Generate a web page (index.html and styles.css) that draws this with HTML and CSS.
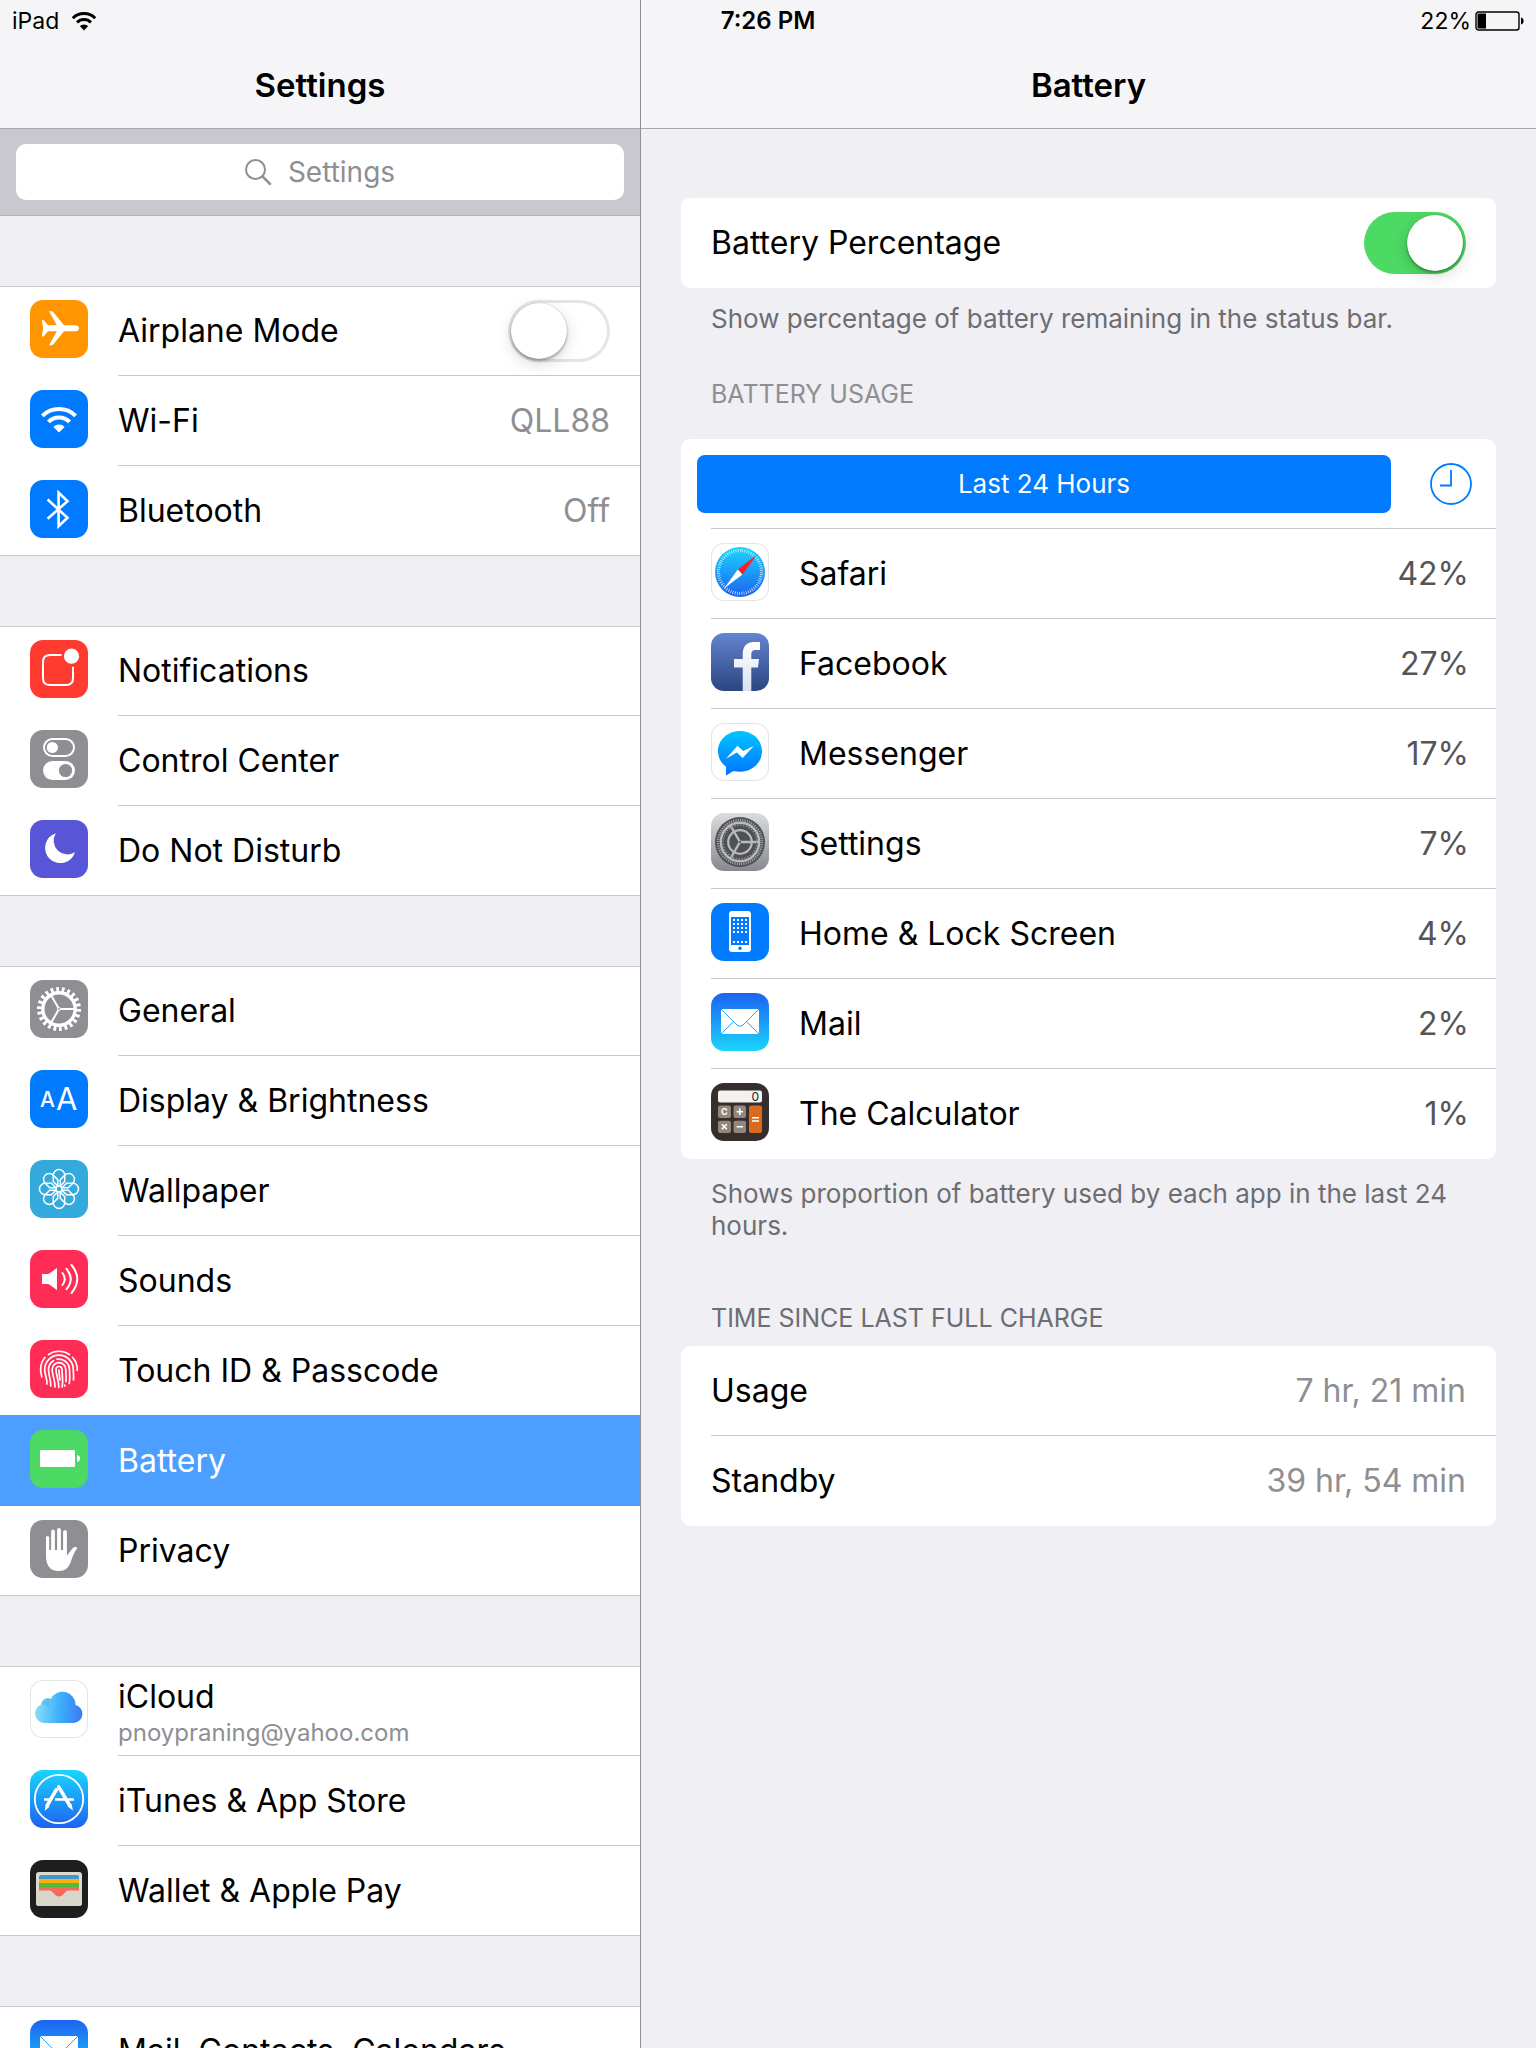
FILE: index.html
```html
<!DOCTYPE html>
<html lang="en">
<head>
    <meta charset="UTF-8">
    <meta name="viewport" content="width=device-width, initial-scale=1.0">
    <title>Settings - Battery</title>
    <link rel="stylesheet" href="styles.css">
</head>
<body>
    <!-- shared gradients and the mail glyph -->
    <svg class="defs" width="0" height="0" aria-hidden="true">
        <defs>
            <linearGradient id="g-cloud" gradientUnits="userSpaceOnUse" x1="5" y1="30" x2="53" y2="34">
                <stop offset="0" stop-color="#8edcf8"/>
                <stop offset="0.5" stop-color="#3bb1fb"/>
                <stop offset="1" stop-color="#3e76f6"/>
            </linearGradient>
            <linearGradient id="g-sky" x1="0" y1="0" x2="0" y2="1">
                <stop offset="0" stop-color="#1ad5fd"/>
                <stop offset="1" stop-color="#1d62f0"/>
            </linearGradient>
            <linearGradient id="g-msg" x1="0" y1="0" x2="0" y2="1">
                <stop offset="0" stop-color="#00c6ff"/>
                <stop offset="1" stop-color="#0072ff"/>
            </linearGradient>
            <linearGradient id="g-f" x1="0" y1="0" x2="0" y2="1">
                <stop offset="0" stop-color="#ffffff"/>
                <stop offset="1" stop-color="#dbe1f1"/>
            </linearGradient>
            <symbol id="mail" viewBox="0 0 58 58">
                <rect x="10" y="16" width="38" height="25" fill="#fff"/>
                <path d="M10 16L25 31.2q4 4 8 0L48 16M10 41L22.5 28.7M48 41L35.5 28.7" fill="none" stroke="#279bf6" stroke-width="1"/>
            </symbol>
        </defs>
    </svg>

    <div class="status-bar">
        <div class="status-left">
            <span>iPad</span>
            <svg class="status-wifi" viewBox="0 0 26 20" aria-hidden="true">
                <path d="M1.8 7.2a15.8 15.8 0 0 1 22.4 0M6 11.4a9.9 9.9 0 0 1 14 0" fill="none" stroke="#000" stroke-width="3"/>
                <path d="M13 19.5l-4.2-4.4a6 6 0 0 1 8.4 0z"/>
            </svg>
        </div>
        <div class="status-time">7:26 PM</div>
        <div class="status-right">
            <span>22%</span>
            <svg class="status-battery" viewBox="0 0 49 20" aria-hidden="true">
                <rect x="1" y="1" width="43" height="18" rx="2.5" fill="none" stroke="#000" stroke-width="1.4"/>
                <rect x="2.5" y="2.5" width="8.5" height="15"/>
                <path d="M46 6.5c1.8.5 2.6 1.9 2.6 3.5s-.8 3-2.6 3.5z"/>
            </svg>
        </div>
    </div>

    <div class="app">
        <aside class="sidebar">
            <header class="navbar"><h1>Settings</h1></header>
            <div class="search-bar">
                <label class="search">
                    <svg class="search-icon" viewBox="0 0 27 27" fill="none" stroke="#8e8e93" aria-hidden="true">
                        <circle cx="10.5" cy="10.5" r="9.5" stroke-width="2"/>
                        <path d="M17.2 17.2l8.5 8.5" stroke-width="2.6"/>
                    </svg>
                    <input type="search" placeholder="Settings" aria-label="Settings">
                </label>
            </div>

            <ul class="group">
                <li>
                    <label class="row">
                        <svg class="icon orange" viewBox="0 0 58 58" fill="#fff"><path d="M12 20h1.5l4.5 5.3h8.8L19 11.3h2.6q1 0 1.8 1L34 25.3h11.5c2.5 0 3.5 1.5 3.5 3s-1 3-3.5 3H34L23.4 44.2q-.8 1-1.8 1H19L26.8 31.3H18l-4.5 5.2H12l1-8.2z"/></svg>
                        <span class="row-body">
                            <span class="name">Airplane Mode</span>
                            <input class="switch" type="checkbox">
                        </span>
                    </label>
                </li>
                <li>
                    <a class="row" href="#">
                        <svg class="icon blue" viewBox="0 0 58 58" fill="none" stroke="#fff" stroke-width="4"><path d="M12.4 25.9a23.5 23.5 0 0 1 33.2 0M18.4 31.9a15 15 0 0 1 21.2 0"/><path d="M29 42.5l-5.6-5.6a8 8 0 0 1 11.2 0z" fill="#fff" stroke="none"/></svg>
                        <span class="row-body">
                            <span class="name">Wi-Fi</span>
                            <span class="value">QLL88</span>
                        </span>
                    </a>
                </li>
                <li>
                    <a class="row" href="#">
                        <svg class="icon blue" viewBox="0 0 58 58" fill="none" stroke="#fff" stroke-width="2.6"><path d="M17.6 19.5L37.5 37.8 28.6 46.2V12.5l8.9 8.7L17.6 38.7"/></svg>
                        <span class="row-body">
                            <span class="name">Bluetooth</span>
                            <span class="value">Off</span>
                        </span>
                    </a>
                </li>
            </ul>

            <ul class="group">
                <li>
                    <a class="row" href="#">
                        <svg class="icon red" viewBox="0 0 58 58" fill="none" stroke="#fff" stroke-width="2"><path d="M31.5 15H20q-7 0-7 7v16q0 7 7 7h16q7 0 7-7V26.7"/><circle cx="41.5" cy="16.2" r="7.6" fill="#fff" stroke="none"/></svg>
                        <span class="row-body"><span class="name">Notifications</span></span>
                    </a>
                </li>
                <li>
                    <a class="row" href="#">
                        <svg class="icon gray" viewBox="0 0 58 58" fill="#fff"><rect x="14" y="9" width="30" height="17" rx="8.5" fill="none" stroke="#fff" stroke-width="2"/><circle cx="22.3" cy="17.5" r="5.6"/><rect x="13" y="31" width="32" height="19" rx="9.5"/><circle cx="35.5" cy="40.5" r="6.6" fill="#8e8e93"/></svg>
                        <span class="row-body"><span class="name">Control Center</span></span>
                    </a>
                </li>
                <li>
                    <a class="row" href="#">
                        <svg class="icon purple" viewBox="0 0 58 58" fill="#fff"><path d="M25.8 13.2A15.3 15.3 0 1 0 45 32.3A13.9 13.9 0 0 1 25.8 13.2z"/></svg>
                        <span class="row-body"><span class="name">Do Not Disturb</span></span>
                    </a>
                </li>
            </ul>

            <ul class="group">
                <li>
                    <a class="row" href="#">
                        <svg class="icon gray" viewBox="0 0 58 58" fill="none" stroke="#fff"><circle cx="29" cy="29" r="19.5" stroke-width="5" pathLength="44" stroke-dasharray="1 1"/><circle cx="29" cy="29" r="16.2" stroke-width="3.4"/><path d="M29 29h15M29 29l-7.5-13M29 29l-7.5 13" stroke-width="2"/><circle cx="29" cy="29" r="1.5" fill="#8e8e93" stroke-width="1"/></svg>
                        <span class="row-body"><span class="name">General</span></span>
                    </a>
                </li>
                <li>
                    <a class="row" href="#">
                        <svg class="icon blue" viewBox="0 0 58 58" fill="#fff"><text x="10" y="37" font-size="21" font-weight="500">A</text><text x="26" y="40" font-size="31" font-weight="400">A</text></svg>
                        <span class="row-body"><span class="name">Display &amp; Brightness</span></span>
                    </a>
                </li>
                <li>
                    <a class="row" href="#">
                        <svg class="icon cyan" viewBox="0 0 58 58" fill="none" stroke="#fff" stroke-width="1.5">
                            <defs><path id="petal" d="M28 26.2L23.3 21.5V15.2a5.7 5.7 0 0 1 11.4 0V21.5L30 26.2"/></defs>
                            <use href="#petal"/>
                            <use href="#petal" transform="rotate(45 29 29)"/>
                            <use href="#petal" transform="rotate(90 29 29)"/>
                            <use href="#petal" transform="rotate(135 29 29)"/>
                            <use href="#petal" transform="rotate(180 29 29)"/>
                            <use href="#petal" transform="rotate(225 29 29)"/>
                            <use href="#petal" transform="rotate(270 29 29)"/>
                            <use href="#petal" transform="rotate(315 29 29)"/>
                            <circle cx="29" cy="29" r="3"/>
                        </svg>
                        <span class="row-body"><span class="name">Wallpaper</span></span>
                    </a>
                </li>
                <li>
                    <a class="row" href="#">
                        <svg class="icon pink" viewBox="0 0 58 58" fill="none" stroke="#fff" stroke-width="2" stroke-linecap="round"><path d="M12 24h6.5l8.5-6v22l-8.5-6H12z" fill="#fff" stroke="none"/><path d="M32.5 23q4.5 6 0 12M36.5 18.8q8.5 10.2 0 20.4M41.5 15q11.5 14 0 28"/></svg>
                        <span class="row-body"><span class="name">Sounds</span></span>
                    </a>
                </li>
                <li>
                    <a class="row" href="#">
                        <svg class="icon pink" viewBox="0 0 58 58" fill="none" stroke="#fff" stroke-width="1.7" stroke-linecap="round"><path d="M18.5 14.5a18.5 18.5 0 0 1 21 0M15 17.3c-4.6 5.4-5.6 12-3.2 19.7M42.5 17.3c3.6 4 4.9 8 4.7 13M17 44c.3-6-2.3-9-2.3-14.5a14.3 14.3 0 0 1 28.6 0c0 4 .6 6.5.2 10.5M20.8 46c.4-6-2.3-10-2.3-16.5a10.5 10.5 0 0 1 5-8.8M27 19.2a10.7 10.7 0 0 1 12.5 10.3c0 5 1 8.5-.3 14M25 47c.3-7-2.8-11-2.8-17.5a6.8 6.8 0 0 1 13.6 0c0 5 .7 8 .1 12M34.8 45v1M28.8 47.5c.3-7-2.8-12-2.8-18a3 3 0 0 1 6 0c0 7 1.5 11 .2 17.5M29 30c0 5 .8 8 1 10"/></svg>
                        <span class="row-body"><span class="name">Touch ID &amp; Passcode</span></span>
                    </a>
                </li>
                <li class="selected">
                    <a class="row" href="#" aria-current="page">
                        <svg class="icon green" viewBox="0 0 58 58" fill="#fff"><rect x="10" y="20" width="35" height="17" rx="1"/><path d="M47 25c2 .5 3 1.8 3 3.5s-1 3-3 3.5z"/></svg>
                        <span class="row-body"><span class="name">Battery</span></span>
                    </a>
                </li>
                <li>
                    <a class="row" href="#">
                        <svg class="icon gray" viewBox="0 0 58 58" fill="#fff" stroke="#fff" stroke-linecap="round"><path d="M17.6 17.6V32" stroke-width="3.2"/><path d="M23 11.4V32M29 10V32M35 12V32" stroke-width="3.8"/><path d="M16 30V36c0 9 4 15 12.5 15 7 0 10-3.5 12-8.5 2-5.5 3.5-10.5 6.5-14 .6-1.6-3-2.2-5 .4L37 35.5V30z" stroke="none"/></svg>
                        <span class="row-body"><span class="name">Privacy</span></span>
                    </a>
                </li>
            </ul>

            <ul class="group">
                <li>
                    <a class="row" href="#">
                        <svg class="icon outlined" viewBox="0 0 58 58"><path d="M14.5 43a9.5 9.5 0 0 1-3.3-18.4 6.6 6.6 0 0 1 9.6-5.6A13 13 0 0 1 45.5 24.9 9.2 9.2 0 0 1 44 43z" fill="url(#g-cloud)"/><path d="M11.2 24.6a6.6 6.6 0 0 1 9.6-5.6 13 13 0 0 0-1.3 9.5q-4-4.5-8.3-3.9z" fill="#2ea4f0" opacity="0.25"/></svg>
                        <span class="row-body stacked">
                            <span class="name">iCloud</span>
                            <span class="subtitle">pnoypraning@yahoo.com</span>
                        </span>
                    </a>
                </li>
                <li>
                    <a class="row" href="#">
                        <svg class="icon sky" viewBox="0 0 58 58" fill="none" stroke="#fff"><circle cx="29" cy="29" r="24.2" stroke-width="1.8"/><path d="M14 29.5h7M25 29.5h10M38 29.5h6" stroke-width="2.6"/><path d="M26.2 19.8L17.5 34.8M28.7 16.8L39.5 35" stroke-width="3.6" stroke-linecap="round"/><path d="M15.6 34.5l4 2.3-4.8 4zM37.6 36.5l4-2.4 1.4 6.4z" fill="#fff" stroke="none"/></svg>
                        <span class="row-body"><span class="name">iTunes &amp; App Store</span></span>
                    </a>
                </li>
                <li>
                    <a class="row" href="#">
                        <svg class="icon black" viewBox="0 0 58 58"><rect x="6" y="12" width="46" height="34" rx="3" fill="#dcdace"/><path d="M9 20v-3q0-2 2-2h36q2 0 2 2v3z" fill="#3f97cb"/><path d="M9 19h40v5H9z" fill="#ffae0f"/><path d="M9 23h40v5H9z" fill="#4fbd3a"/><path d="M9 27h40v4H9z" fill="#f66a5c"/><path d="M6 30.5h14c3 0 4 6 9 6s6-6 9-6h14V43q0 3-3 3H9q-3 0-3-3z" fill="#d8d5c9"/><path d="M19.5 30.5c4 0 4.5 6 9.5 6s5.5-6 9.5-6z" fill="#f66a5c"/></svg>
                        <span class="row-body"><span class="name">Wallet &amp; Apple Pay</span></span>
                    </a>
                </li>
            </ul>

            <ul class="group">
                <li>
                    <a class="row" href="#">
                        <svg class="icon mail"><use href="#mail"/></svg>
                        <span class="row-body"><span class="name">Mail, Contacts, Calendars</span></span>
                    </a>
                </li>
            </ul>
        </aside>

        <main class="detail">
            <header class="navbar"><h1>Battery</h1></header>
            <div class="content">
                <div class="card">
                    <label class="row">
                        <span class="row-body">
                            <span class="name">Battery Percentage</span>
                            <input class="switch" type="checkbox" checked>
                        </span>
                    </label>
                </div>
                <p class="note">Show percentage of battery remaining in the status bar.</p>

                <h2 class="card-title usage-title">BATTERY USAGE</h2>
                <div class="card">
                    <div class="usage-bar">
                        <button class="segment" type="button">Last 24 Hours</button>
                        <button class="clock" type="button" aria-label="Show usage time">
                            <svg viewBox="0 0 42 42" fill="none" stroke="#007aff"><circle cx="21" cy="21" r="20" stroke-width="1.8"/><path d="M21 7v15.5H10" stroke-width="1.8"/></svg>
                        </button>
                    </div>
                    <ul class="apps">
                        <li class="row">
                            <svg class="icon outlined" viewBox="0 0 58 58"><circle cx="29" cy="29" r="25" fill="url(#g-sky)"/><circle cx="29" cy="29" r="21.5" fill="none" stroke="#fff" stroke-width="3.2" pathLength="120" stroke-dasharray="0.7 1.3" opacity="0.8"/><path d="M45.7 12L26.8 26.6l4.6 4.8z" fill="#ff1d1d"/><path d="M13 45.5L26.8 26.6l4.6 4.8z" fill="#fff"/></svg>
                            <span class="row-body"><span class="name">Safari</span><span class="value">42%</span></span>
                        </li>
                        <li class="row">
                            <svg class="icon facebook" viewBox="0 0 58 58"><path d="M31.7 58V34.5H23V26h8.7v-4.5C31.7 13 36 9 43 9h6v8h-4.5c-3 0-4.2 1.5-4.2 4.5V26H48l-1 8.5h-6.7V58z" fill="url(#g-f)"/></svg>
                            <span class="row-body"><span class="name">Facebook</span><span class="value">27%</span></span>
                        </li>
                        <li class="row">
                            <svg class="icon outlined" viewBox="0 0 58 58"><path d="M29 8C16.5 8 7 17 7 28.2c0 6.4 3 11.8 8 15.5v8.8l7.5-4.6c2 .5 4.2.8 6.5.8 12.5 0 22-9.2 22-20.5S41.5 8 29 8z" fill="url(#g-msg)"/><path d="M15 35.8L26.5 22.7l5.8 5.3L43 22.7 31.6 35l-5.8-5.5z" fill="#fff"/></svg>
                            <span class="row-body"><span class="name">Messenger</span><span class="value">17%</span></span>
                        </li>
                        <li class="row">
                            <svg class="icon steel" viewBox="0 0 58 58" fill="none"><circle cx="29" cy="29" r="25" fill="#505154"/><circle cx="29" cy="29" r="22" stroke="#a9aaad" stroke-width="2.4" pathLength="120" stroke-dasharray="0.9 1.1"/><circle cx="29" cy="29" r="19.2" stroke="#b9babd" stroke-width="2.4"/><circle cx="29" cy="29" r="11.8" stroke="#b9babd" stroke-width="2.2"/><path d="M29 29h19M29 29l-9.5-16.5M29 29l-9.5 16.5" stroke="#b9babd" stroke-width="2.4"/><circle cx="29" cy="29" r="17" stroke="#8c8d91" stroke-width="1.5" pathLength="72" stroke-dasharray="1 1"/><circle cx="29" cy="29" r="1" fill="#505154"/></svg>
                            <span class="row-body"><span class="name">Settings</span><span class="value">7%</span></span>
                        </li>
                        <li class="row">
                            <svg class="icon blue" viewBox="0 0 58 58"><rect x="18" y="8" width="22" height="41" rx="3" fill="#fff"/><path d="M20 14h18v28H20z" fill="#007aff"/><path d="M22 17h14M22 21h14M22 25h14M22 29h14M22 39h14" stroke="#fff" stroke-width="2" stroke-dasharray="2 2"/><circle cx="29" cy="45.2" r="1.7" fill="#007aff"/></svg>
                            <span class="row-body"><span class="name">Home &amp; Lock Screen</span><span class="value">4%</span></span>
                        </li>
                        <li class="row">
                            <svg class="icon mail"><use href="#mail"/></svg>
                            <span class="row-body"><span class="name">Mail</span><span class="value">2%</span></span>
                        </li>
                        <li class="row">
                            <svg class="icon brown" viewBox="0 0 58 58">
                                <rect x="7" y="7.5" width="44" height="12" rx="2" fill="#f3f2f0"/>
                                <text x="40.5" y="17.6" font-size="12" fill="#222">0</text>
                                <path d="M9 22.5h9q2 0 2 2v8.5q0 2-2 2H9q-2 0-2-2v-8.5q0-2 2-2zM24.5 22.5h8.5q2 0 2 2v8.5q0 2-2 2h-8.5q-2 0-2-2v-8.5q0-2 2-2zM9 37.7h9q2 0 2 2V48q0 2-2 2H9q-2 0-2-2v-8.3q0-2 2-2zM24.5 37.7h8.5q2 0 2 2V48q0 2-2 2h-8.5q-2 0-2-2v-8.3q0-2 2-2z" fill="#92877d"/>
                                <rect x="38" y="22.5" width="13" height="27.5" rx="2" fill="#d96b21"/>
                                <text x="10" y="31.8" font-size="9" font-weight="700" fill="#fff">C</text>
                                <path d="M25.6 28.7h6.4M28.8 25.5v6.4M10.8 41.2l5 5M15.8 41.2l-5 5M25.6 43.7h6.4M41 34.8h7M41 38h7" stroke="#fff" stroke-width="1.6"/>
                            </svg>
                            <span class="row-body"><span class="name">The Calculator</span><span class="value">1%</span></span>
                        </li>
                    </ul>
                </div>
                <p class="note usage-note">Shows proportion of battery used by each app in the last 24 hours.</p>

                <h2 class="card-title charge-title">TIME SINCE LAST FULL CHARGE</h2>
                <ul class="card">
                    <li class="row"><span class="row-body"><span class="name">Usage</span><span class="value">7 hr, 21 min</span></span></li>
                    <li class="row"><span class="row-body"><span class="name">Standby</span><span class="value">39 hr, 54 min</span></span></li>
                </ul>
            </div>
        </main>
    </div>
</body>
</html>
```

FILE: styles.css
```css
* {
    box-sizing: border-box;
}
body {
    margin: 0;
    font-family: Inter, "Liberation Sans", sans-serif;
    font-size: 32px;
    line-height: 40px;
    color: #000;
    background-color: #efeff4;
}
ul {
    list-style: none;
    margin: 0;
    padding: 0;
}
.defs {
    position: absolute;
}

/* status bar, lies over both nav bars */
.status-bar {
    position: absolute;
    top: 0;
    left: 0;
    right: 0;
    z-index: 1;
    display: grid;
    grid-template-columns: 1fr auto 1fr;
    align-items: center;
    height: 42px;
    padding: 0 12px;
    font-size: 23px;
}
.status-left,
.status-right {
    display: flex;
    align-items: center;
}
.status-left {
    gap: 12px;
}
.status-right {
    justify-content: flex-end;
    gap: 4px;
}
.status-time {
    font-size: 24px;
    font-weight: 600;
}
.status-wifi {
    width: 26px;
    height: 20px;
}
.status-battery {
    width: 49px;
    height: 20px;
}

.app {
    display: flex;
    height: 100vh;
    overflow: hidden;
}
.sidebar {
    flex: 0 0 641px;
    border-right: 1px solid #8e8e93;
    overflow-y: auto;
    scrollbar-width: none;
}
.detail {
    flex: 1;
    overflow-y: auto;
    scrollbar-width: none;
}
.navbar {
    display: flex;
    justify-content: center;
    align-items: flex-end;
    height: 129px;
    padding-bottom: 23px;
    background-color: #f5f5f7;
    border-bottom: 1px solid #a7a7ac;
}
.navbar h1 {
    margin: 0;
    font-size: 33px;
    font-weight: 600;
}

/* search */
.search-bar {
    padding: 15px 16px;
    background-color: #c9c8ce;
    border-bottom: 1px solid #b5b4ba;
}
.search {
    display: flex;
    justify-content: center;
    align-items: center;
    gap: 16px;
    height: 56px;
    border-radius: 10px;
    background-color: #fff;
}
.search-icon {
    width: 27px;
    height: 27px;
}
.search input {
    field-sizing: content;
    padding: 0;
    border: 0;
    outline: none;
    background: none;
    appearance: none;
    font: inherit;
    font-size: 28px;
}
.search input::placeholder {
    color: #8e8e93;
}

/* rows */
.group {
    margin-top: 70px;
    background-color: #fff;
    border-top: 1px solid #c8c7cc;
    border-bottom: 1px solid #c8c7cc;
}
.row {
    display: flex;
    height: 90px;
    padding-left: 30px;
    color: inherit;
    text-decoration: none;
}
.group li:first-child {
    margin-top: -1px;
}
.group li:last-child {
    margin-bottom: -1px;
}
.icon {
    flex: none;
    width: 58px;
    height: 58px;
    margin-top: 14px;
    margin-right: 30px;
    border-radius: 13px;
    font-family: Inter, "Liberation Sans", sans-serif;
}
.row-body {
    flex: 1;
    display: flex;
    justify-content: space-between;
    align-items: center;
    padding-right: 30px;
    border-bottom: 1px solid #c8c7cc;
}
.group li:last-child .row-body,
.card .row:last-child .row-body {
    border-bottom-color: transparent;
}
.row-body.stacked {
    flex-direction: column;
    justify-content: center;
    align-items: flex-start;
    padding-top: 4px;
}
.subtitle {
    font-size: 24px;
    line-height: 32px;
    color: #8e8e93;
}
.value {
    color: #8e8e93;
}
.selected {
    /* covers the hairline of the row above */
    position: relative;
    margin-top: -1px;
    padding-top: 1px;
    background-color: #4c9fff;
    color: #fff;
}
.selected .row-body {
    border-bottom-color: transparent;
}

.orange { background-color: #ff9500; }
.blue { background-color: #007aff; }
.red { background-color: #ff3b30; }
.gray { background-color: #8e8e93; }
.purple { background-color: #5856d6; }
.cyan { background-color: #34aadc; }
.pink { background-color: #ff2d55; }
.green { background-color: #4cd964; }
.black { background-color: #1e1e1e; }
.brown { background-color: #352e2b; }
.outlined { background-color: #fff; box-shadow: inset 0 0 0 1px #e4e4e6; }
.sky { background: linear-gradient(#1ad5fd, #1d62f0); }
.mail { background: linear-gradient(#1d62f0, #1ad5fd); }
.facebook { background: linear-gradient(#6384d0, #2b4680); }
.steel { background: linear-gradient(#dcdddf, #88898e); }

.switch {
    appearance: none;
    flex: none;
    width: 102px;
    height: 62px;
    margin: 0;
    padding: 3px;
    border-radius: 31px;
    background-color: #fff;
    box-shadow: inset 0 0 0 3px #e5e5e5;
}
.switch::before {
    content: "";
    display: block;
    width: 56px;
    height: 56px;
    border-radius: 50%;
    background-color: #fff;
    box-shadow: 0 0 1px rgba(0, 0, 0, 0.3), 0 2px 3px rgba(0, 0, 0, 0.3), 0 5px 16px rgba(0, 0, 0, 0.15);
}
.switch:checked {
    background-color: #4cd964;
    box-shadow: none;
}
.switch:checked::before {
    margin-left: 40px;
}

/* detail pane */
.content {
    padding: 69px 40px;
}
.card {
    background-color: #fff;
    border-radius: 9px;
}
.note,
.card-title {
    margin: 0;
    padding: 0 30px;
    font-weight: 400;
    line-height: 32px;
    color: #6d6d72;
}
.note {
    padding-top: 15px;
    font-size: 26px;
}
.usage-note {
    padding-top: 19px;
}
.card-title {
    font-size: 25px;
}
.usage-title {
    margin: 43px 0 29px;
    color: #8e8e93;
}
.charge-title {
    margin: 60px 0 12px;
}
.usage-bar {
    display: flex;
    align-items: center;
    height: 90px;
    padding: 0 24px 0 16px;
    gap: 39px;
    /* hairline starts at the icon column */
    background: linear-gradient(#c8c7cc, #c8c7cc) 30px 100% / 100% 1px no-repeat;
}
.apps .row {
    margin-left: 30px;
    padding-left: 0;
    border-bottom: 1px solid #c8c7cc;
}
.apps .row:last-child {
    border-bottom-color: transparent;
}
.apps .row-body {
    padding-right: 27px;
    border-bottom: 0;
}
.apps .value {
    color: #555;
}
.segment {
    flex: 1;
    height: 58px;
    border: 0;
    border-radius: 8px;
    background-color: #007aff;
    color: #fff;
    font: inherit;
    font-size: 26px;
}
.clock {
    display: flex;
    padding: 0;
    border: 0;
    background: none;
}
.clock svg {
    width: 42px;
    height: 42px;
}
```
